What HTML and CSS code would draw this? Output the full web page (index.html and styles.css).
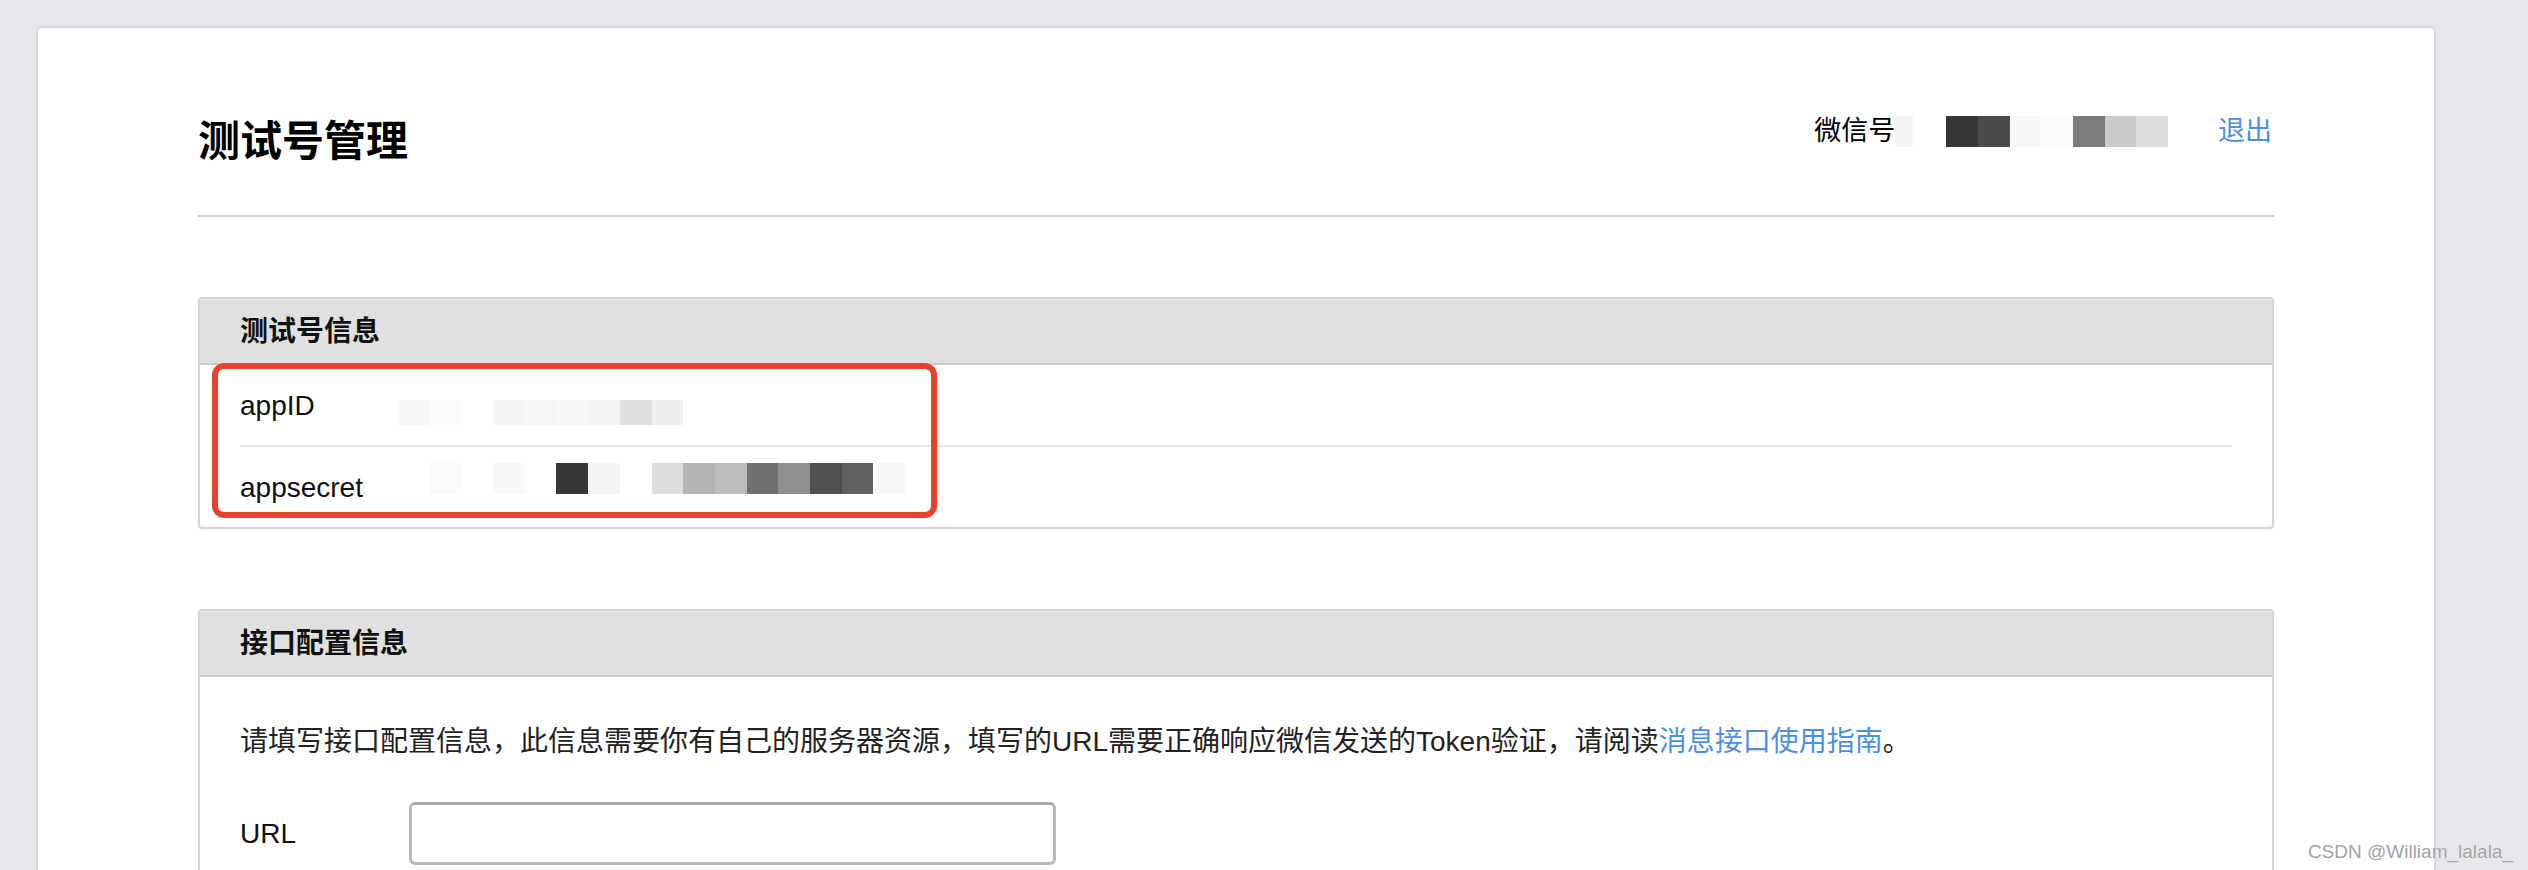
FILE: index.html
```html
<!DOCTYPE html>
<html lang="zh-CN">
<head>
<meta charset="utf-8">
<title>测试号管理</title>
<link rel="stylesheet" href="styles.css">
</head>
<body>
<div class="page">
  <div class="card">
    <header class="top">
      <h1 class="title">测试号管理</h1>
      <div class="account">
        <span class="account-label">微信号</span>
        <span class="mask mask-account">
          <i class="px px-narrow kf5"></i><i class="px-gap"></i>
          <i class="px k36"></i><i class="px k4a"></i><i class="px kf9"></i><i class="px kfb"></i><i class="px k7b"></i><i class="px kcb"></i><i class="px kdc"></i>
        </span>
        <a class="link logout" href="#">退出</a>
      </div>
    </header>
    <hr class="divider">

    <section class="panel">
      <div class="panel-head">测试号信息</div>
      <div class="panel-body">
        <div class="kv">
          <span class="kv-label">appID</span>
          <span class="mask mask-id">
            <i class="px kf9"></i><i class="px kfb"></i><i class="px k0"></i><i class="px kf5"></i><i class="px kf6"></i><i class="px kf9"></i><i class="px kf5"></i><i class="px kdf"></i><i class="px kef"></i>
          </span>
        </div>
        <div class="kv">
          <span class="kv-label">appsecret</span>
          <span class="mask mask-secret">
            <i class="px k0"></i><i class="px kfa"></i><i class="px k0"></i><i class="px kf9"></i><i class="px k0"></i><i class="px k36"></i><i class="px kf5"></i><i class="px k0"></i><i class="px kdd"></i><i class="px kb4"></i><i class="px kbd"></i><i class="px k70"></i><i class="px k8f"></i><i class="px k50"></i><i class="px k61"></i><i class="px kf7"></i>
          </span>
        </div>
      </div>
      <div class="annot"></div>
    </section>

    <section class="panel panel-config">
      <div class="panel-head">接口配置信息</div>
      <div class="panel-body form-body">
        <p class="desc">请填写接口配置信息，此信息需要你有自己的服务器资源，填写的URL需要正确响应微信发送的Token验证，请阅读<a class="link" href="#">消息接口使用指南</a>。</p>
        <div class="field">
          <label class="field-label">URL</label>
          <input class="input" type="text">
        </div>
      </div>
    </section>
  </div>
  <div class="watermark">CSDN @William_lalala_</div>
</div>
</body>
</html>
```

FILE: styles.css
```css
* {
  box-sizing: border-box;
}

html, body {
  margin: 0;
  padding: 0;
}

body {
  background: #e6e7eb;
  font-family: "Liberation Sans", "Noto Sans CJK SC", sans-serif;
  color: #222;
  overflow: hidden;
}

.page {
  position: relative;
  min-height: 870px;
  padding: 26px 0 0 36px;
}

.card {
  width: 2400px;
  background: #fff;
  border: 2px solid #d6d6d6;
  border-radius: 5px;
  padding: 86px 160px 120px;
}

/* header */
.top {
  display: flex;
  justify-content: space-between;
  align-items: flex-start;
}

.title {
  margin: 0;
  padding-top: 7px;
  font-size: 42px;
  line-height: 42px;
  font-weight: 700;
  color: #000;
}

.account {
  display: flex;
  align-items: flex-start;
  font-size: 27px;
  line-height: 27px;
  color: #000;
  margin-right: 2px;
}

.account-label,
.logout {
  display: block;
  padding-top: 4px;
}

.mask {
  display: flex;
}

.mask-account {
  height: 31px;
  margin-top: 2px;
  margin-right: 50px;
}

.px {
  display: block;
  width: 31.7px;
  height: 100%;
}

.px-narrow {
  width: 18px;
}

.px-gap {
  display: block;
  width: 33px;
}

.k0 { background: transparent; }
.k36 { background: #363636; }
.k4a { background: #4a4a4a; }
.k50 { background: #505050; }
.k61 { background: #616161; }
.k70 { background: #707070; }
.k7b { background: #7b7b7b; }
.k8f { background: #8f8f8f; }
.kb4 { background: #b4b4b4; }
.kbd { background: #bdbdbd; }
.kcb { background: #cbcbcb; }
.kdc { background: #dcdcdc; }
.kdd { background: #dddddd; }
.kdf { background: #dfdfdf; }
.kef { background: #efefef; }
.kf5 { background: #f4f4f4; }
.kf6 { background: #f6f6f6; }
.kf7 { background: #f7f7f7; }
.kf9 { background: #f8f8f8; }
.kfa { background: #fafafa; }
.kfb { background: #fbfbfb; }

.link {
  color: #4a8fe3;
  text-decoration: none;
}

.divider {
  margin: 52px 0 0;
  border: 0;
  height: 2px;
  background: #d2d2d2;
}

/* panels */
.panel {
  position: relative;
  margin-top: 80px;
  border: 2px solid #d3d3d3;
  border-radius: 4px;
}

.panel-head {
  height: 66px;
  line-height: 64px;
  padding-top: 1px;
  padding-left: 40px;
  background: #e0e0e0;
  border-bottom: 2px solid #c9c9c9;
  box-shadow: inset 0 1px 0 #ebebeb;
  font-size: 28px;
  font-weight: 700;
  color: #111;
}

.panel-body {
  padding: 0 40px;
}

.kv {
  display: flex;
  align-items: flex-start;
  padding: 21px 0 19px;
  font-size: 28px;
  line-height: 40px;
  color: #111;
}

.kv + .kv {
  border-top: 2px solid #e6e6e6;
}

.kv-label {
  width: 158px;
  flex: none;
}

.mask-id {
  height: 25px;
  margin-top: 14px;
}

.mask-secret {
  height: 31px;
  margin-top: -5px;
}

.annot {
  position: absolute;
  left: 12px;
  top: 64px;
  width: 725px;
  height: 155px;
  border: 6px solid #e8412c;
  border-radius: 12px;
  pointer-events: none;
}

/* config form */
.form-body {
  padding-top: 45px;
  padding-bottom: 120px;
}

.desc {
  margin: 0;
  font-size: 28px;
  line-height: 40px;
  color: #222;
}

.field {
  display: flex;
  align-items: center;
  margin-top: 40px;
}

.field-label {
  width: 169px;
  flex: none;
  font-size: 28px;
  line-height: 40px;
  color: #111;
}

.input {
  width: 647px;
  height: 63px;
  border: 3px solid #b8b8b8;
  border-top-color: #a8a8a8;
  border-radius: 6px;
  background: #fff;
  font: inherit;
}

.watermark {
  position: absolute;
  top: 842px;
  right: 15px;
  font-size: 19px;
  line-height: 19px;
  color: #a3a3a3;
  text-shadow: 0 0 1px #fff;
  white-space: nowrap;
}
```
